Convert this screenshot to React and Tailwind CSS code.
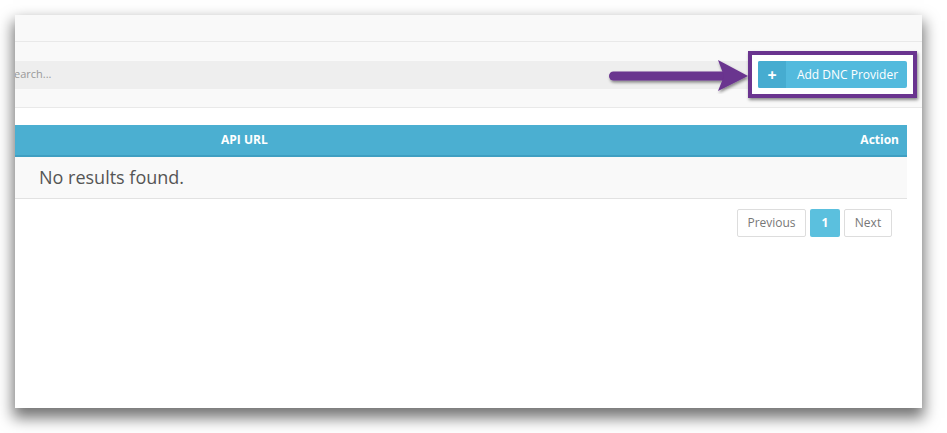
export default function App() {
  return (
    <div className="h-[433px] w-[947px] overflow-hidden bg-white p-[15px] font-['Open_Sans',sans-serif]">
      <div className="relative flex h-[393px] w-[907px] flex-col bg-white shadow-[0_8px_14px_2px_rgba(0,0,0,0.55)]">
        <div className="h-[27px] border-b border-[#e9e9e9] bg-[#f9f9f9]" />

        <div className="flex h-[66px] items-center border-b border-[#e9e9e9] bg-[#f9f9f9]">
          <div className="flex h-[28px] flex-1 items-center overflow-hidden bg-[#eeeeee] text-[11px] text-[#999]">
            <span className="-ml-[7px]">Search...</span>
          </div>
          <div className="mr-[5px] border-4 border-[#6a348f] bg-white px-[6px] py-[6px] shadow-[1px_2px_3px_rgba(0,0,0,0.45)]">
            <button className="flex h-[27px] w-[149px] items-center overflow-hidden rounded-[2px] bg-[#53badd] text-[12px] text-white">
              <span className="flex h-full w-[28px] items-center justify-center bg-[#46acd0] text-[16px] font-bold">+</span>
              <span className="flex-1 pl-[2px] text-center">Add DNC Provider</span>
            </button>
          </div>
        </div>

        <div className="mr-[15px] mt-[17px]">
          <div className="flex h-[32px] items-center border-b-2 border-[#3f9fc2] bg-[#4bafd1] text-[12px] font-bold text-white">
            <span className="pl-[206px]">API URL</span>
            <span className="ml-auto pr-[8px]">Action</span>
          </div>
          <div className="flex h-[42px] items-center border-b border-[#e2e2e2] bg-[#f9f9f9] pl-[24px] text-[18px] text-[#555]">
            No results found.
          </div>
        </div>

        <div className="mr-[30px] mt-[10px] flex justify-end gap-[4px] text-[12px]">
          <span className="flex h-[28px] w-[69px] items-center justify-center rounded-[2px] border border-[#dddddd] text-[#777]">Previous</span>
          <span className="flex h-[28px] w-[30px] items-center justify-center rounded-[2px] bg-[#5bc0de] font-bold text-white">1</span>
          <span className="flex h-[28px] w-[48px] items-center justify-center rounded-[2px] border border-[#dddddd] text-[#777]">Next</span>
        </div>

        <svg className="absolute left-[575px] top-[29px]" width="170" height="50" viewBox="0 0 170 50">
          <defs>
            <filter id="sh" x="-10%" y="-30%" width="130%" height="170%">
              <feDropShadow dx="1" dy="2" stdDeviation="1.5" floodColor="#000" floodOpacity="0.45" />
            </filter>
          </defs>
          <g filter="url(#sh)" fill="#6a348f">
            <rect x="19" y="27.5" width="118" height="9" rx="4.5" />
            <path d="M128 16 L158 32 L128 47 L134 32 Z" />
          </g>
        </svg>
      </div>
    </div>
  );
}
